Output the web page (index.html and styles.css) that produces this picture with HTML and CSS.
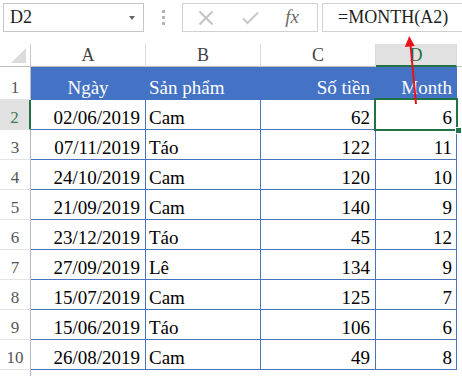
FILE: index.html
```html
<!DOCTYPE html>
<html>
<head>
<meta charset="utf-8">
<link rel="stylesheet" href="styles.css">
</head>
<body>
<div class="app">
  <div class="toolbar">
    <div class="namebox"><span class="ref">D2</span><span class="caret"></span></div>
    <div class="grip"><i></i><i></i><i></i></div>
    <div class="btns">
      <span class="btn"><svg width="16" height="16" viewBox="0 0 16 16"><path d="M1.5 1.5 L14.5 14.5 M14.5 1.5 L1.5 14.5" stroke="#c4c4c4" stroke-width="2" fill="none"/></svg></span>
      <span class="btn"><svg width="17" height="14" viewBox="0 0 17 14"><path d="M1 7.5 L5.5 12 L16 1.5" stroke="#c8c8c8" stroke-width="2" fill="none"/></svg></span>
      <span class="btn fx">fx</span>
    </div>
    <div class="formula">=MONTH(A2)</div>
  </div>

  <div class="sheet">
    <div class="ch corner"><span class="tri"></span></div>
    <div class="ch">A</div>
    <div class="ch">B</div>
    <div class="ch">C</div>
    <div class="ch sel">D</div>
    <div class="ch e"></div>

    <div class="rh">1</div>
    <div class="hd c">Ngày</div>
    <div class="hd l">Sản phẩm</div>
    <div class="hd r">Số tiền</div>
    <div class="hd r rd">Month</div>
    <div class="e"></div>

    <div class="rh rsel">2</div>
    <div class="td r">02/06/2019</div><div class="td l">Cam</div><div class="td r">62</div><div class="td r rd">6</div><div class="e"></div>
    <div class="rh">3</div>
    <div class="td r">07/11/2019</div><div class="td l">Táo</div><div class="td r">122</div><div class="td r rd">11</div><div class="e"></div>
    <div class="rh">4</div>
    <div class="td r">24/10/2019</div><div class="td l">Cam</div><div class="td r">120</div><div class="td r rd">10</div><div class="e"></div>
    <div class="rh">5</div>
    <div class="td r">21/09/2019</div><div class="td l">Cam</div><div class="td r">140</div><div class="td r rd">9</div><div class="e"></div>
    <div class="rh">6</div>
    <div class="td r">23/12/2019</div><div class="td l">Táo</div><div class="td r">45</div><div class="td r rd">12</div><div class="e"></div>
    <div class="rh">7</div>
    <div class="td r">27/09/2019</div><div class="td l">Lê</div><div class="td r">134</div><div class="td r rd">9</div><div class="e"></div>
    <div class="rh">8</div>
    <div class="td r">15/07/2019</div><div class="td l">Cam</div><div class="td r">125</div><div class="td r rd">7</div><div class="e"></div>
    <div class="rh">9</div>
    <div class="td r">15/06/2019</div><div class="td l">Táo</div><div class="td r">106</div><div class="td r rd">6</div><div class="e"></div>
    <div class="rh">10</div>
    <div class="td r">26/08/2019</div><div class="td l">Cam</div><div class="td r">49</div><div class="td r rd">8</div><div class="e"></div>
    <div class="rh last"></div>
  </div>

  <div class="selection"></div>
  <div class="handle"></div>
  <svg class="arrow" width="462" height="376" viewBox="0 0 462 376">
    <line x1="416" y1="104" x2="410.6" y2="46" stroke="#e8141c" stroke-width="2"/>
    <polygon points="409.2,36 404.8,47 414.8,46" fill="#e8141c"/>
  </svg>
</div>
</body>
</html>
```

FILE: styles.css
```css
* {
  font-family: "Liberation Serif", "Times New Roman", Times, serif;
}
html, body {
  margin: 0;
  padding: 0;
  background: #ffffff;
}
.app {
  position: relative;
  width: 462px;
  height: 376px;
  overflow: hidden;
  color: #000;
}
.toolbar {
  display: flex;
  align-items: flex-start;
  height: 44px;
  padding-top: 3px;
  box-sizing: border-box;
}
.namebox {
  margin-left: 3px;
  width: 141px;
  height: 29px;
  box-sizing: border-box;
  border: 1px solid #c6c6c6;
  display: flex;
  align-items: center;
  justify-content: space-between;
  padding: 0 8px 0 6px;
  font-size: 18px;
  color: #222;
}
.caret {
  width: 0;
  height: 0;
  border-left: 3.5px solid transparent;
  border-right: 3.5px solid transparent;
  border-top: 4px solid #666;
  margin-top: 1px;
}
.grip {
  width: 38px;
  height: 29px;
  display: flex;
  flex-direction: column;
  align-items: center;
  justify-content: center;
  gap: 3px;
}
.grip i {
  display: block;
  width: 3px;
  height: 3px;
  background: #b5b5b5;
}
.btns {
  width: 136px;
  height: 29px;
  box-sizing: border-box;
  border: 1px solid #d0d0d0;
  display: grid;
  grid-template-columns: 45px 45px 1fr;
  align-items: center;
}
.btn {
  display: flex;
  justify-content: center;
  align-items: center;
}
.fx {
  font-style: italic;
  font-size: 19px;
  color: #6a6a6a;
  padding-right: 6px;
  padding-bottom: 2px;
}
.formula {
  margin-left: 4px;
  flex: 1;
  height: 29px;
  box-sizing: border-box;
  border: 1px solid #d0d0d0;
  border-right: none;
  display: flex;
  align-items: center;
  padding-left: 15px;
  font-size: 18px;
  color: #222;
}
.sheet {
  display: grid;
  grid-template-columns: 31px 115px 115px 115px 81px 1fr;
  grid-template-rows: 23px 33px repeat(9, 30px) 1fr;
  height: 332px;
}
.sheet > div {
  box-sizing: border-box;
}
.ch {
  border-right: 1px solid #dadada;
  border-bottom: 1px solid #bdbdbd;
  display: flex;
  justify-content: center;
  align-items: flex-end;
  font-size: 18px;
  line-height: 21px;
  color: #444;
}
.ch.e {
  border-right: none;
}
.ch.corner {
  position: relative;
  border-right: 1px solid #c8c8c8;
}
.tri {
  position: absolute;
  right: 4px;
  bottom: 3px;
  width: 0;
  height: 0;
  border-left: 15px solid transparent;
  border-bottom: 15px solid #dcdcdc;
}
.ch.sel {
  background: #e1e1e1;
  color: #217346;
  border-bottom: 2px solid #217346;
  line-height: 20px;
}
.rh {
  border-right: 1px solid #b8bcc6;
  border-bottom: 1px solid #e3e3e3;
  display: flex;
  justify-content: center;
  align-items: flex-end;
  font-size: 17px;
  line-height: 22px;
  color: #555;
}
.rh.rsel {
  background: #e1e1e1;
  color: #3d7a58;
  border-right: 2px solid #217346;
}
.rh.last {
  border-bottom: none;
}
.hd {
  background: #4472c4;
  color: #ffffff;
  border-right: 1px solid #4472c4;
  border-bottom: 1px solid #4472c4;
  display: flex;
  align-items: flex-end;
  font-size: 19px;
  line-height: 22px;
  white-space: nowrap;
}
.td {
  border-right: 1px solid #4a72bd;
  border-bottom: 1px solid #4a72bd;
  display: flex;
  align-items: flex-end;
  font-size: 19px;
  line-height: 22px;
  white-space: nowrap;
}
.c { justify-content: center; }
.l { justify-content: flex-start; padding-left: 3px; }
.r { justify-content: flex-end; padding-right: 5px; }
.sheet .rd { padding-right: 4px; }
.selection {
  position: absolute;
  left: 374px;
  top: 98px;
  width: 84px;
  height: 33px;
  border: 2px solid #217346;
  box-sizing: border-box;
}
.handle {
  position: absolute;
  left: 455px;
  top: 127px;
  width: 7px;
  height: 7px;
  background: #217346;
  border: 1px solid #ffffff;
  box-sizing: border-box;
}
.arrow {
  position: absolute;
  left: 0;
  top: 0;
  pointer-events: none;
}
```
